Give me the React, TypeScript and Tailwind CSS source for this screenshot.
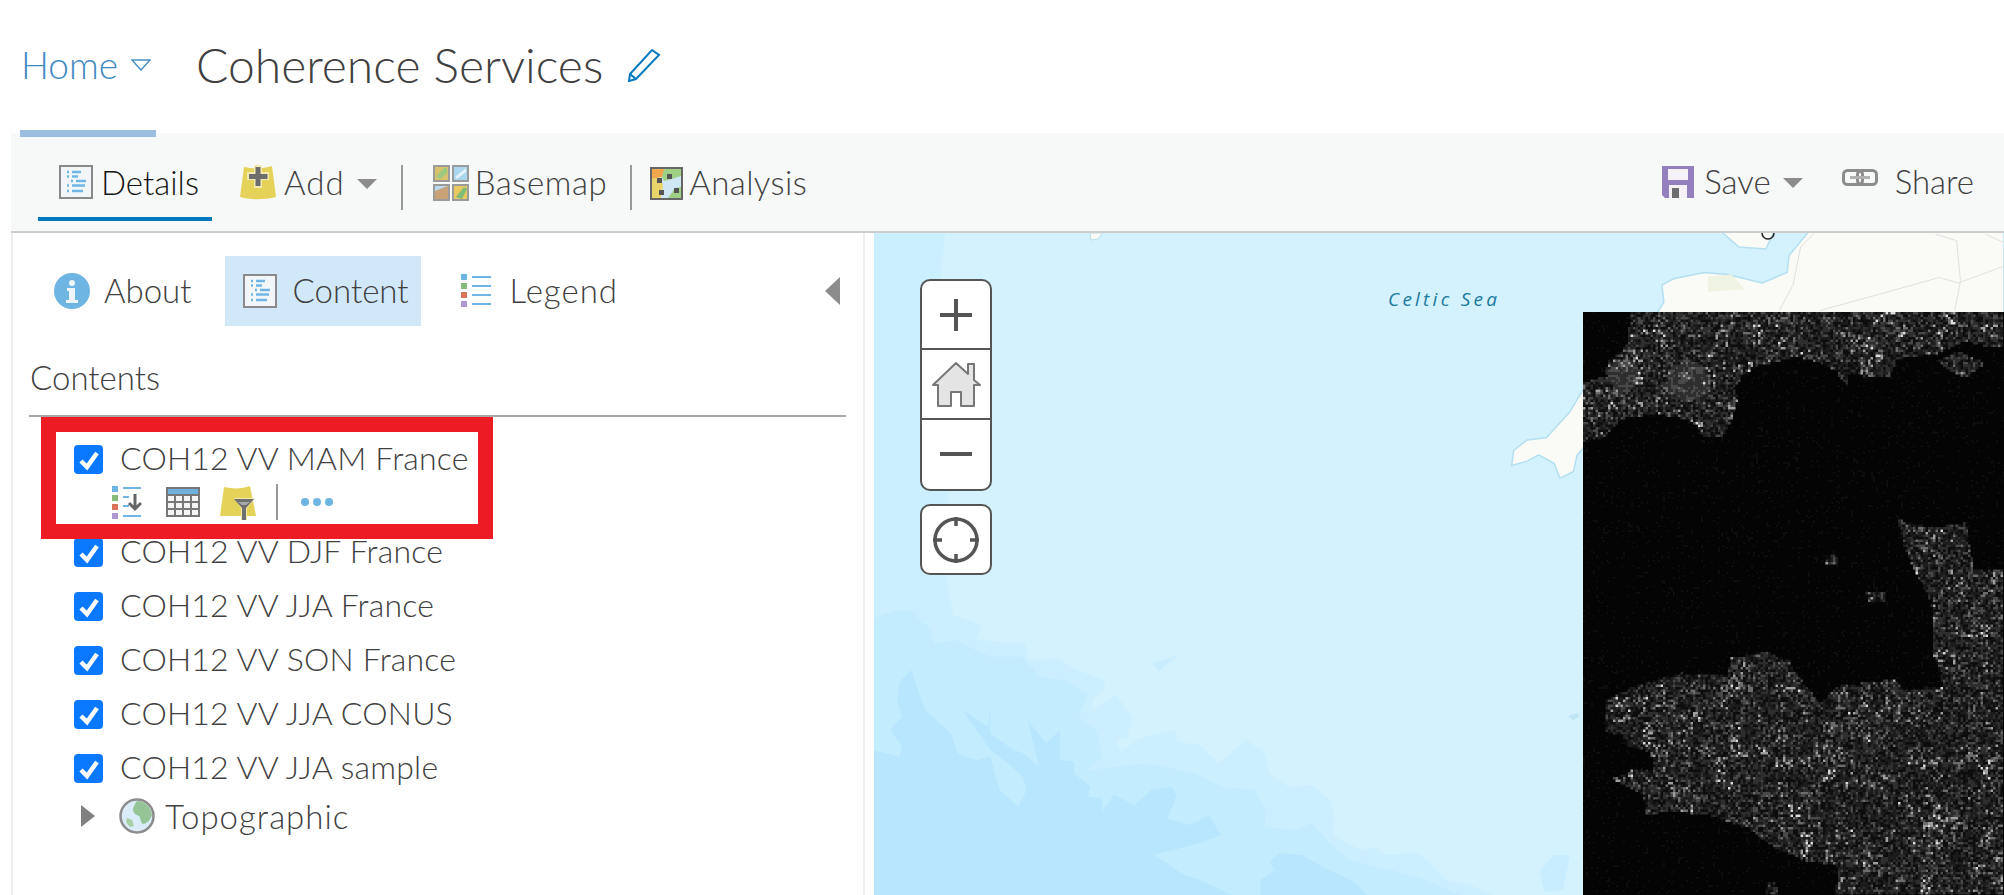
import { useMemo } from 'react'

type Pt = [number, number]

// crops of the map were read at different scales, these bring them back to page coords
const r = (pts: number[][]) => pts.map(([x, y]) => [1400 + x / 2.596, 230 + y / 2.358] as Pt)
const d = (pts: number[][]) => pts.map(([x, y]) => [860 + x / 2.148, 560 + y / 3] as Pt)
const toPoints = (pts: Pt[]) => pts.map((p) => p.join(',')).join(' ')

const midDepth: Pt[] = [[874, 233], [945, 233], [938, 300], [950, 400], [946, 577], ...d([[200, 165], [260, 195], [250, 240], [355, 250], [360, 300], [430, 295], [455, 325], [525, 360], [525, 390], [500, 420], [500, 450], [550, 405], [585, 470], [575, 530], [550, 540], [560, 575], [600, 535], [680, 510], [680, 545], [730, 555], [770, 610], [830, 540], [870, 580], [880, 640], [920, 680], [970, 675], [1010, 720], [1020, 790], [1015, 825], [1075, 870], [1110, 860], [1130, 885], [1200, 880], [1225, 910], [1260, 960], [1310, 975], [1360, 1005], [0, 1005]]), [874, 233]]
const midDepth2 = d([[0, 190], [75, 150], [105, 150], [150, 200], [160, 250], [205, 240], [280, 290], [350, 290], [385, 350], [440, 360], [490, 400], [470, 470], [510, 510], [520, 590], [490, 630], [620, 610], [720, 640], [780, 680], [850, 690], [870, 750], [870, 800], [930, 810], [970, 790], [1010, 850], [1050, 900], [1200, 950], [1290, 1005], [0, 1005]])
const deepDepth = d([[0, 560], [85, 590], [90, 560], [65, 510], [90, 470], [80, 425], [85, 365], [110, 330], [140, 450], [195, 520], [210, 580], [250, 600], [280, 590], [300, 690], [340, 740], [358, 690], [350, 650], [300, 590], [280, 570], [220, 450], [275, 500], [280, 430], [280, 520], [330, 570], [350, 580], [385, 620], [360, 480], [400, 550], [430, 510], [430, 600], [460, 605], [460, 640], [495, 680], [490, 710], [520, 715], [520, 755], [545, 705], [590, 735], [625, 690], [670, 680], [680, 710], [660, 775], [710, 795], [750, 765], [775, 825], [730, 850], [630, 885], [660, 910], [690, 940], [730, 960], [800, 1005], [860, 1005], [860, 960], [890, 930], [880, 905], [900, 880], [950, 885], [1000, 925], [1060, 965], [1090, 1005], [0, 1005]])
const patches = [
  d([[630, 310], [685, 285], [640, 335]]),
  d([[1460, 935], [1490, 885], [1525, 885], [1510, 990], [1470, 995]]),
]

const cornwall = r([[480, 370], [440, 430], [420, 450], [380, 490], [330, 495], [295, 520], [290, 555], [330, 545], [360, 530], [400, 550], [415, 585], [450, 570], [460, 530], [480, 510]])
const northCoast = r([[1060, 5], [1010, 60], [1005, 100], [940, 125], [850, 105], [790, 100], [710, 115], [680, 130], [685, 170], [665, 200], [1568, 200], [1568, 5]])
const topIsland = r([[835, 5], [880, 40], [950, 45], [970, 5]])
const roads = [
  r([[1090, 190], [1270, 145], [1400, 112], [1450, 125], [1568, 85]]),
  r([[985, 190], [1020, 130], [1040, 40], [1075, 8]]),
  r([[1390, 10], [1445, 25], [1455, 120], [1440, 190]]),
  r([[1520, 10], [1568, 30]]),
]

// raster land, same crop coords as r()
const land = [
  [[600, 193], [1568, 193], [1568, 275], [1520, 275], [1470, 262], [1400, 290], [1330, 300], [1290, 305], [1270, 350], [1220, 345], [1160, 340], [1160, 370], [1130, 330], [1080, 310], [1030, 298], [980, 310], [930, 320], [890, 345], [870, 370], [878, 400], [865, 440], [838, 490], [790, 490], [770, 460], [720, 440], [650, 435], [580, 445], [530, 490], [476, 500], [476, 360], [530, 345], [540, 310], [590, 270]],
  [[1395, 310], [1450, 285], [1520, 315], [1470, 350], [1420, 330]],
  [[1290, 675], [1320, 695], [1400, 700], [1470, 690], [1475, 730], [1490, 800], [1568, 800], [1568, 1568], [1130, 1568], [1140, 1500], [1060, 1490], [980, 1460], [900, 1410], [800, 1380], [700, 1370], [640, 1380], [630, 1330], [550, 1295], [600, 1275], [660, 1270], [650, 1230], [590, 1220], [575, 1190], [535, 1185], [535, 1110], [610, 1075], [730, 1045], [850, 1050], [860, 1010], [950, 995], [1010, 1015], [1050, 1070], [1090, 1115], [1140, 1075], [1280, 1060], [1310, 1085], [1410, 1075], [1385, 1000], [1380, 880], [1330, 790], [1305, 740]],
  [[1095, 785], [1130, 760], [1140, 790]],
  [[1210, 850], [1260, 855], [1260, 880], [1215, 880]],
  [[1165, 780], [1185, 780], [1175, 795]],
  [[945, 1535], [975, 1540], [985, 1568], [950, 1568]],
].map(r)

const inside = (x: number, y: number, poly: Pt[]) => {
  let hit = false
  for (let i = 0, j = poly.length - 1; i < poly.length; j = i++) {
    const [xi, yi] = poly[i]
    const [xj, yj] = poly[j]
    if (yi > y !== yj > y && x < ((xj - xi) * (y - yi)) / (yj - yi) + xi) hit = !hit
  }
  return hit
}

const grays = ['#0c0c0c', '#1c1c1c', '#2e2e2e', '#484848', '#6c6c6c', '#a0a0a0', '#dcdcdc']
const cell = 2.5

function buildRaster() {
  let seed = 1337
  const rnd = () => {
    seed = (seed * 1664525 + 1013904223) >>> 0
    return seed / 4294967296
  }
  // coarse grid so the speckle clumps a bit instead of being flat noise
  const clump: number[] = []
  for (let i = 0; i < 40 * 60; i++) clump.push(0.75 + rnd() * 0.5)
  const paths: string[] = grays.map(() => '')
  for (let y = 312; y < 895; y += cell) {
    for (let x = 1583; x < 2004; x += cell) {
      const square = `M${x} ${y}h${cell}v${cell}h-${cell}z`
      if (!land.some((p) => inside(x + 1.25, y + 1.25, p))) {
        if (rnd() < 0.1) paths[0] += square
        continue
      }
      const c = clump[Math.floor((x - 1583) / 12) + 40 * Math.floor((y - 312) / 12)]
      const v = rnd() * c
      // two grey moors on the english side
      const moor = Math.hypot(x - 1623, y - 374) < 16 || Math.hypot(x - 1687, y - 380) < 20
      let level = v < 0.25 ? 0 : v < 0.5 ? 1 : v < 0.75 ? 2 : v < 0.92 ? 3 : v < 1.05 ? 4 : v < 1.16 ? 5 : 6
      if (moor) level = Math.max(level, 2 + (v > 0.5 ? 1 : 0))
      paths[level] += square
    }
  }
  return paths
}

function MapArt() {
  const raster = useMemo(buildRaster, [])
  return (
    <svg className="absolute inset-0 h-full w-full" viewBox="874 233 1130 662">
      <defs>
        <filter id="soft">
          <feGaussianBlur stdDeviation="0.6" />
        </filter>
      </defs>
      <rect x="874" y="233" width="1130" height="662" fill="#d4f1fe" />
      <polygon points={toPoints(midDepth)} fill="#ccefff" />
      <polygon points={toPoints(midDepth2)} fill="#c4ecff" />
      <polygon points={toPoints(deepDepth)} fill="#b8e6ff" />
      {patches.map((p, i) => (
        <polygon key={i} points={toPoints(p)} fill="#c8edff" />
      ))}
      <polygon points="1090,233 1103,233 1098,239 1091,240" fill="#fafaf6" stroke="#b5e0f0" />
      {[northCoast, topIsland, cornwall].map((p, i) => (
        <polygon key={i} points={toPoints(p)} fill="#fafaf6" stroke="#b3dff0" strokeWidth="1.5" />
      ))}
      <polygon points={toPoints(r([[800, 110], [860, 105], [895, 140], [800, 145]]))} fill="#eef3e2" />
      {roads.map((p, i) => (
        <polyline key={i} points={toPoints(p)} fill="none" stroke="#e0e0de" />
      ))}
      <path d="M1762 233a6 6 0 0 0 12 0" fill="none" stroke="#222" strokeWidth="1.5" />
      <path d="M1568 716l9-3 3 3-7 4z" fill="#bfe6f5" />
      <rect x="1583" y="312" width="421" height="583" fill="#040404" />
      <g filter="url(#soft)">
        {raster.map((path, i) => (
          <path key={i} d={path} fill={grays[i]} />
        ))}
      </g>
    </svg>
  )
}

function ListIcon({ className }: { className: string }) {
  return (
    <svg className={className} viewBox="0 0 34 34">
      <rect x="1" y="1" width="32" height="32" fill="#f3f6f8" stroke="#8a8a8a" strokeWidth="2" />
      <g stroke="#6fb6e6" strokeWidth="2.4">
        <path d="M8 7h2M13 7h9M8 11.5h2M13 11.5h6M12 16h2M17 16h10M8 20.5h2M13 20.5h13M8 26h2M13 26h11" />
      </g>
    </svg>
  )
}

function AddIcon() {
  return (
    <svg className="h-9 w-9" viewBox="0 0 36 36">
      <path d="M4 2c9 2 19 2 28-1l4 31c-12 3-24 3-36 0z" fill="#e5d359" />
      <path d="M14 0h8v7h7v8h-7v8h-8v-8H7V7h7z" fill="#f2eab0" />
      <path d="M15.5 2h5v7h7v5h-7v7h-5v-7H9V9h6.5z" fill="#6d6d6d" />
    </svg>
  )
}

function BasemapIcon() {
  return (
    <svg className="h-[36px] w-[36px]" viewBox="0 0 36 36">
      <rect x="1" y="1" width="15" height="15" fill="#d8c26e" stroke="#9b9b9b" strokeWidth="2" />
      <path d="M3 12l8-9h3v5l-7 6z" fill="#9cc87f" />
      <rect x="20" y="1" width="15" height="15" fill="#a9d7ef" stroke="#9b9b9b" strokeWidth="2" />
      <path d="M22 12l11-9v4l-9 7z" fill="#e4f3fb" />
      <rect x="1" y="20" width="15" height="15" fill="#c9a377" stroke="#9b9b9b" strokeWidth="2" />
      <path d="M2 21h13l-13 5z" fill="#bcd9ee" />
      <rect x="20" y="20" width="15" height="15" fill="#e7c861" stroke="#9b9b9b" strokeWidth="2" />
      <path d="M23 32l8-10 3 2-5 10z" fill="#82bb76" />
    </svg>
  )
}

function AnalysisIcon() {
  return (
    <svg className="h-[33px] w-[33px]" viewBox="0 0 33 33">
      <rect x="1" y="1" width="31" height="31" fill="#cfe7f5" />
      <path d="M2 2h16l-6 8-10 2z" fill="#f0a64c" />
      <path d="M14 2h17v7l-9 3-8 2-2-4z" fill="#a0cf86" />
      <path d="M2 12l8-2 3 8-2 13H2z" fill="#e8d468" />
      <path d="M18 31l7-10 6-1v11z" fill="#a0cf86" />
      <rect x="1" y="1" width="31" height="31" fill="none" stroke="#666" strokeWidth="2" />
      <g fill="#555">
        <rect x="7" y="11" width="5" height="5" />
        <rect x="17" y="7" width="5" height="5" />
        <rect x="9" y="23" width="5" height="5" />
        <rect x="24" y="21" width="5" height="5" />
      </g>
    </svg>
  )
}

function SaveIcon() {
  return (
    <svg className="h-8 w-8" viewBox="0 0 32 32">
      <path d="M0 0h32v32H3l-3-3z" fill="#9580bf" />
      <rect x="6" y="3" width="20" height="11" fill="#f4f2f8" />
      <rect x="7" y="19" width="18" height="13" fill="#f4f2f8" />
      <rect x="10" y="22" width="7" height="10" fill="#6e6e6e" />
    </svg>
  )
}

function ShareIcon() {
  return (
    <svg className="h-[17px] w-9" viewBox="0 0 36 17" fill="none" stroke="#8c8c8c">
      <rect x="1.5" y="1.5" width="19" height="14" rx="4" strokeWidth="3" />
      <rect x="15.5" y="1.5" width="19" height="14" rx="4" strokeWidth="3" />
      <path d="M8 8.5h20" strokeWidth="3" stroke="#b0b0b0" />
    </svg>
  )
}

function AboutIcon() {
  return (
    <svg className="h-9 w-9" viewBox="0 0 36 36">
      <circle cx="18" cy="18" r="18" fill="#6fb5e3" />
      <circle cx="18" cy="10" r="3" fill="#eef6fb" />
      <path d="M13 15h8v12h3v3H12v-3h3v-9h-2z" fill="#eef6fb" />
    </svg>
  )
}

function LegendIcon() {
  return (
    <svg className="h-[36px] w-[32px]" viewBox="0 0 32 36">
      <rect x="1" y="1" width="6" height="6" fill="#6fb5e3" />
      <rect x="1" y="10" width="6" height="6" fill="#87bb7b" />
      <rect x="1" y="19" width="6" height="6" fill="#d9735a" />
      <rect x="1" y="28" width="6" height="6" fill="#ad9ad0" />
      <path d="M12 4h19M12 13h19M12 22h19M12 31h19" stroke="#6fb5e3" strokeWidth="2.2" />
    </svg>
  )
}

function LayerLegendIcon() {
  return (
    <svg className="h-[35px] w-[30px]" viewBox="0 0 30 35">
      <rect x="0" y="1" width="6" height="6" fill="#6fb5e3" />
      <rect x="0" y="10" width="6" height="6" fill="#87bb7b" />
      <rect x="0" y="19" width="6" height="6" fill="#d9735a" />
      <rect x="0" y="28" width="6" height="6" fill="#ad9ad0" />
      <path d="M11 3h18M11 12h6M11 21h6M11 31h18" stroke="#6fb5e3" strokeWidth="2.2" />
      <path d="M23 9v15M17 18l6 6 6-6" fill="none" stroke="#666" strokeWidth="3" />
    </svg>
  )
}

function TableIcon() {
  return (
    <svg className="h-[30px] w-[34px]" viewBox="0 0 34 30">
      <rect x="0" y="0" width="34" height="30" fill="#777" />
      <rect x="2" y="2" width="30" height="5" fill="#6fb0de" />
      {[9, 16, 23].map((y) =>
        [2, 10, 18, 26].map((x) => <rect key={`${x}-${y}`} x={x} y={y} width="6" height="5" fill="#f4f4f4" />),
      )}
    </svg>
  )
}

function FilterIcon() {
  return (
    <svg className="h-[35px] w-9" viewBox="0 0 36 35">
      <path d="M4 2c9 2 18 2 26-1l6 30H0z" fill="#e5d359" />
      <path d="M14 13h21l-8 10v12h-6V23z" fill="#f0e8ad" />
      <path d="M14 14h20l-8 9v12h-4V23z" fill="#6f6f6f" />
      <path d="M18 17h12l-4 3h-4z" fill="#aaa" />
    </svg>
  )
}

function GlobeIcon() {
  return (
    <svg className="h-9 w-9" viewBox="0 0 36 36">
      <circle cx="18" cy="18" r="16.5" fill="#d9ecf8" stroke="#8c8c8c" strokeWidth="2.5" />
      <path d="M18 3c8 0 14 6 15 14-2 6-6 9-9 9-3-2-2-6-4-8-3-1-6-3-6-7 1-3 2-6 4-8z" fill="#95c596" />
      <path d="M8 20l5 2 2 6-4 1-4-5z" fill="#a7cfa4" />
    </svg>
  )
}

function HomeIcon() {
  return (
    <svg className="h-[46px] w-[50px]" viewBox="0 0 50 46">
      <path d="M2 24L25 2l12 11V3h6v16l6 5h-6v21H30V31H20v14H7V24z" fill="#e4e4e4" stroke="#777" strokeWidth="2" strokeLinejoin="round" />
    </svg>
  )
}

function LocateIcon() {
  return (
    <svg className="h-[48px] w-[48px]" viewBox="0 0 48 48" fill="none" stroke="#555" strokeWidth="3.5">
      <circle cx="24" cy="24" r="21" />
      <path d="M24 1v9M24 38v9M1 24h9M38 24h9" />
    </svg>
  )
}

function Check() {
  return (
    <span className="flex h-[29px] w-[29px] shrink-0 items-center justify-center rounded-[4px] bg-[#0a78ff]">
      <svg className="h-[22px] w-[22px]" viewBox="0 0 22 22" fill="none">
        <path d="M3 12l6 6L19 4" stroke="#fff" strokeWidth="4.5" />
      </svg>
    </span>
  )
}

function LayerRow({ name }: { name: string }) {
  return (
    <div className="flex h-[29px] items-center gap-[17px]">
      <Check />
      <span className="whitespace-nowrap pb-[3px] text-[32px] font-light leading-[36px] tracking-[0.2px] text-[#404040]">{name}</span>
    </div>
  )
}

function Caret() {
  return <span className="ml-3 mt-[2px] h-0 w-0 border-x-[10px] border-t-[10px] border-x-transparent border-t-[#8c8c8c]" />
}

function Sep({ className }: { className: string }) {
  return <span className={`h-[45px] w-[2px] self-start bg-[#999] ${className}`} />
}

export default function App() {
  return (
    <div className="h-[895px] w-[2004px] overflow-hidden bg-white font-['Lato',sans-serif] font-light text-[#404040]">
      {/* title bar */}
      <div className="flex h-[133px] items-start">
        <div className="relative z-10 ml-5 flex h-[137px] w-[136px] items-center border-b-[7px] border-[#9abde0] pl-px">
          <span className="text-[37px] leading-[44px] text-[#3f8ac4]">Home</span>
          <svg className="ml-[13px] h-3 w-5" viewBox="0 0 20 12" fill="none">
            <path d="M1 1h18L10 11z" stroke="#4a90c4" strokeWidth="1.5" />
          </svg>
        </div>
        <div className="ml-10 flex h-[133px] items-center pb-1">
          <span className="text-[48px] leading-[56px]">Coherence Services</span>
          <svg className="ml-6 h-[34px] w-[34px]" viewBox="0 0 34 34" fill="none">
            <path d="M25 2l7 5L9 31l-7 2 1-7z" stroke="#0079c1" strokeWidth="2" />
            <path d="M3 26l6 5" stroke="#0079c1" strokeWidth="2" />
          </svg>
        </div>
      </div>

      {/* toolbar */}
      <div className="ml-[11px] flex h-[100px] items-start border-b-2 border-[#ccc] bg-[#f7f8f8] text-[33px] leading-[36px]">
        <div className="ml-[27px] flex h-[88px] w-[174px] items-start border-b-4 border-[#0079c1] pl-[21px] pt-[31px]">
          <ListIcon className="mt-px h-[34px] w-[34px]" />
          <span className="ml-2 text-[#151515]">Details</span>
        </div>
        <div className="ml-7 flex h-[68px] items-center pt-[32px]">
          <AddIcon />
          <span className="ml-2 pb-[2px] tracking-[1px]">Add</span>
          <Caret />
          <Sep className="ml-6" />
          <span className="ml-[30px]"><BasemapIcon /></span>
          <span className="ml-[6px] pb-[2px] tracking-[0.6px]">Basemap</span>
          <Sep className="ml-[23px]" />
          <span className="ml-[18px]"><AnalysisIcon /></span>
          <span className="ml-[6px] pb-[2px] tracking-[0.4px]">Analysis</span>
        </div>
        <div className="ml-auto mr-[30px] flex h-[67px] items-center pt-[31px]">
          <SaveIcon />
          <span className="ml-[10px] pb-[2px]">Save</span>
          <Caret />
          <span className="-mt-[9px] ml-[39px]"><ShareIcon /></span>
          <span className="ml-[17px] pb-[2px]">Share</span>
        </div>
      </div>

      <div className="ml-[11px] flex h-[662px]">
        {/* layer panel */}
        <div className="h-full w-[854px] shrink-0 border-x-2 border-[#eeeeee] text-[33px]">
          <div className="mt-[23px] flex h-[70px] items-center">
            <span className="ml-[41px]"><AboutIcon /></span>
            <span className="ml-[14px]">About</span>
            <div className="ml-[33px] flex h-[70px] w-[196px] items-center bg-[#d1e8f9] pl-[18px]">
              <ListIcon className="h-[34px] w-[34px]" />
              <span className="ml-4">Content</span>
            </div>
            <span className="ml-[39px]"><LegendIcon /></span>
            <span className="ml-[18px] tracking-[1px]">Legend</span>
            <span className="ml-auto mr-[23px] h-0 w-0 border-y-[14px] border-r-[15px] border-y-transparent border-r-[#8c8c8c]" />
          </div>
          <div className="ml-4 flex h-[91px] w-[817px] items-end border-b-2 border-[#a8a8a8] pb-5 pl-px leading-[36px]">
            Contents
          </div>
          <div className="relative z-10 ml-[28px] h-[122px] w-[452px] border-[15px] border-[#ed1c24] bg-white pl-[18px] pt-[13px]">
            <LayerRow name="COH12 VV MAM France" />
            <div className="mt-[10px] flex items-center pl-[38px]">
              <LayerLegendIcon />
              <span className="ml-6"><TableIcon /></span>
              <span className="ml-5"><FilterIcon /></span>
              <span className="ml-5 h-9 w-[2px] bg-[#999]" />
              <span className="ml-[23px] flex gap-1">
                <i className="h-2 w-2 rounded-full bg-[#6fb5e3]" />
                <i className="h-2 w-2 rounded-full bg-[#6fb5e3]" />
                <i className="h-2 w-2 rounded-full bg-[#6fb5e3]" />
              </span>
            </div>
          </div>
          <div className="-mt-px ml-[61px] flex flex-col gap-[25px]">
            <LayerRow name="COH12 VV DJF France" />
            <LayerRow name="COH12 VV JJA France" />
            <LayerRow name="COH12 VV SON France" />
            <LayerRow name="COH12 VV JJA CONUS" />
            <LayerRow name="COH12 VV JJA sample" />
          </div>
          <div className="ml-[68px] mt-[15px] flex h-9 items-center">
            <span className="h-0 w-0 border-y-[11px] border-l-[14px] border-y-transparent border-l-[#808080]" />
            <span className="ml-6"><GlobeIcon /></span>
            <span className="ml-[10px] text-[33px] leading-[36px] tracking-[1px]">Topographic</span>
          </div>
        </div>

        {/* map */}
        <div className="relative ml-[9px] flex-1 overflow-hidden">
          <MapArt />
          <span className="absolute left-[514px] top-[52px] font-['Open_Sans',sans-serif] text-[19px] font-normal italic tracking-[0.17em] text-[#1b7a9e]">
            Celtic Sea
          </span>
          <div className="absolute left-[46px] top-[46px] flex flex-col gap-[13px]">
            <div className="flex h-[212px] w-[72px] flex-col divide-y-2 divide-[#555] rounded-[10px] border-2 border-[#555] bg-white">
              <div className="flex h-[70px] items-center justify-center">
                <svg className="h-8 w-8" viewBox="0 0 32 32">
                  <path d="M16 0v32M0 16h32" stroke="#555" strokeWidth="4" />
                </svg>
              </div>
              <div className="flex h-[70px] items-center justify-center">
                <HomeIcon />
              </div>
              <div className="flex h-[70px] items-center justify-center">
                <svg className="h-8 w-8" viewBox="0 0 32 32">
                  <path d="M0 16h32" stroke="#555" strokeWidth="4" />
                </svg>
              </div>
            </div>
            <div className="flex h-[71px] w-[72px] items-center justify-center rounded-[10px] border-2 border-[#555] bg-white">
              <LocateIcon />
            </div>
          </div>
        </div>
      </div>
    </div>
  )
}
